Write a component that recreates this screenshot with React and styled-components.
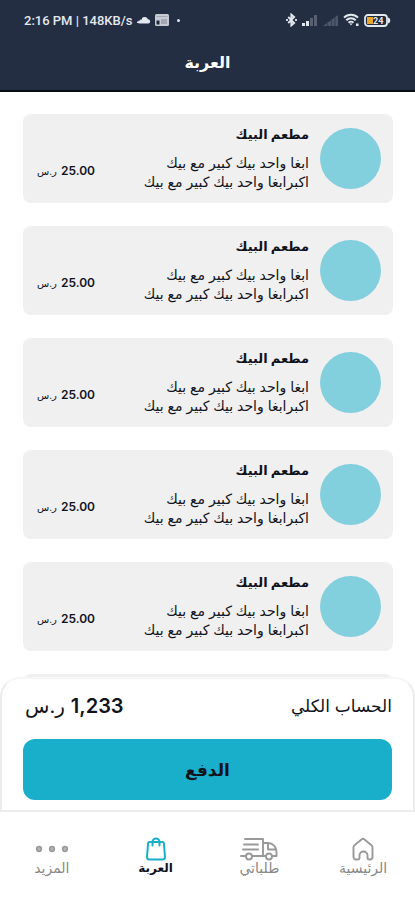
import { useState } from 'react';
import styled, { createGlobalStyle } from 'styled-components';

const items = Array.from({ length: 5 }, (_, i) => ({
  id: i + 1,
  restaurant: 'مطعم البيك',
  details: ['ابغا واحد بيك كبير مع بيك', 'اكبرابغا واحد بيك كبير مع بيك'],
  price: '25.00',
}));

const tabs = [
  { id: 'home', label: 'الرئيسية', Icon: HomeIcon },
  { id: 'orders', label: 'طلباتي', Icon: TruckIcon },
  { id: 'cart', label: 'العربة', Icon: BagIcon },
  { id: 'more', label: 'المزيد', Icon: MoreIcon },
];

export default function App() {
  const [activeTab, setActiveTab] = useState('cart');

  return (
    <>
      <GlobalStyle />
      <Screen dir='rtl' lang='ar'>
        <Header>
          <StatusBar />
          <PageTitle>العربة</PageTitle>
        </Header>
        <CartList>
          {items.map((item) => (
            <CartItem key={item.id} item={item} />
          ))}
          <Card aria-hidden='true'>
            <Thumb />
          </Card>
        </CartList>
        <Checkout>
          <TotalRow>
            <TotalLabel>الحساب الكلي</TotalLabel>
            <Total>
              <bdi>1,233</bdi>
              <TotalCurrency>ر.س</TotalCurrency>
            </Total>
          </TotalRow>
          <PayButton type='button'>الدفع</PayButton>
        </Checkout>
        <TabBar>
          {tabs.map(({ id, label, Icon }) => (
            <Tab key={id} type='button' $active={id === activeTab} onClick={() => setActiveTab(id)}>
              <Icon />
              <TabLabel $active={id === activeTab}>{label}</TabLabel>
            </Tab>
          ))}
        </TabBar>
      </Screen>
    </>
  );
}

function CartItem({ item }) {
  return (
    <Card>
      <Thumb />
      <Info>
        <Restaurant>{item.restaurant}</Restaurant>
        {item.details.map((line) => (
          <Detail key={line}>{line}</Detail>
        ))}
      </Info>
      <Price>
        <bdi>{item.price}</bdi>
        <Currency>ر.س</Currency>
      </Price>
    </Card>
  );
}

function StatusBar() {
  return (
    <Status dir='ltr' lang='en'>
      <StatusGroup>
        <span>2:16 PM | 148KB/s</span>
        <svg width='14' height='8' viewBox='0 0 14 8' fill='#e4e8ef' aria-hidden='true'>
          <path d='M5 7.5V2A3.8 3.8 0 0 1 11 3.2a2.2 2.2 0 0 1 .6 4.3zM3.2 3.5h2v4h-2zM1.6 4.5h2v3h-2zM0 5.5h2V7H0z' />
        </svg>
        <CardIcon />
        <Dot />
      </StatusGroup>
      <StatusGroup>
        <svg width='11' height='14' viewBox='0 0 11 14' fill='none' stroke='#e4e8ef' strokeWidth='1.8' aria-hidden='true'>
          <path d='M2.2 4l6 6-2.900 2.500V1.500L8.200 4l-6 6' />
          <path d='M1 6v2M10 6v2' />
        </svg>
        <SignalIcon />
        <svg width='17' height='12' viewBox='0 0 17 12' aria-hidden='true'>
          <path d='M1 12L16 1v11z' fill='#4d576a' />
          <path d='M5.500 8v4M9.500 5v7M13 3v9' stroke='#353f53' />
        </svg>
        <svg width='17' height='14' viewBox='0 0 17 14' fill='none' stroke='#e4e8ef' strokeWidth='2' aria-hidden='true'>
          <path d='M1 4.6a10 10 0 0 1 14 0M3.3 7.2a6.8 6.8 0 0 1 9.4 0M5.6 9.7a3.4 3.4 0 0 1 4.8 0' />
          <path d='M6.6 10.6h2.8L8 12.6zM13 10.5h2.5V13H13z' fill='#e4e8ef' stroke='none' />
        </svg>
        <svg width='27' height='13' viewBox='0 0 27 13' aria-hidden='true'>
          <rect x='1' y='1' width='22' height='11' rx='3' fill='#202a3d' stroke='#e4e8ef' strokeWidth='1.8' />
          <path d='M24 3.5c3 .6 3 5.4 0 6z' fill='#e4e8ef' />
          <path d='M3 3h6v7H3z' fill='#e9a52b' />
          <text x='9' y='9.5' fontSize='9' fontWeight='700' fill='#e4e8ef'>
            24
          </text>
        </svg>
      </StatusGroup>
    </Status>
  );
}

function CardIcon() {
  return (
    <svg width='14' height='12' viewBox='0 0 14 12' aria-hidden='true'>
      <rect width='14' height='12' rx='1.5' fill='#c6cbd3' />
      <path d='M1.5 2.5h11' stroke='#a2a8b2' />
      <path d='M1.5 6.5h3v4h-3z' fill='#202a3d' />
      <path d='M6 5h6v5H6z' fill='#a2a8b2' />
    </svg>
  );
}

function SignalIcon() {
  return (
    <svg width='17' height='12' viewBox='0 0 17 12' aria-hidden='true'>
      {[3, 5, 8, 11].map((height, i) => (
        <rect key={height} x={1 + i * 4} y={12 - height} width='3' height={height} fill={i < 2 ? '#e4e8ef' : '#566072'} />
      ))}
    </svg>
  );
}

function HomeIcon() {
  return (
    <svg width='22' height='24' viewBox='0 0 22 24' fill='none' stroke='currentColor' strokeWidth='1.9' strokeLinejoin='round' aria-hidden='true'>
      <path d='M1.5 10.2Q1.5 9 2.5 8.2L9.8 2.2q1.2-.9 2.4 0l7.3 6q1 .8 1 2V20a2.5 2.5 0 0 1-2.5 2.5h-1q-1.500 0-1.500-1.500v-2.500a4 4 0 0 0-8 0V21q0 1.500-1.500 1.500H4A2.5 2.5 0 0 1 1.5 20z' />
    </svg>
  );
}

function TruckIcon() {
  return (
    <svg width='38' height='24' viewBox='0 0 38 24' fill='none' stroke='currentColor' strokeWidth='1.9' strokeLinecap='round' strokeLinejoin='round' aria-hidden='true'>
      <path d='M5 2h18v17M4 7.5h14M3 12.5h15M1 19h5M12 19h14M23 6h5c5 0 8.500 4 8.500 9v4h-4M28 7v5.5h8' />
      <circle cx='9' cy='19.5' r='3' />
      <circle cx='29' cy='19.5' r='3' />
    </svg>
  );
}

function BagIcon() {
  return (
    <svg width='20' height='24' viewBox='0 0 20 24' fill='none' stroke='currentColor' strokeWidth='2' strokeLinecap='round' strokeLinejoin='round' aria-hidden='true'>
      <path d='M3.5 5h13q1.2 0 1.4 1.2L19 20a2.5 2.5 0 0 1-2.5 2.5h-13A2.5 2.5 0 0 1 1 20L2.1 6.2Q2.3 5 3.5 5z' />
      <path d='M6.5 8.5V5a3.5 3.5 0 0 1 7 0v3.5' />
    </svg>
  );
}

function MoreIcon() {
  return (
    <svg width='34' height='24' viewBox='0 0 34 24' fill='#b4b4b4' stroke='currentColor' strokeWidth='1.5' aria-hidden='true'>
      <circle cx='4' cy='12' r='2.4' />
      <circle cx='17' cy='12' r='2.4' />
      <circle cx='30' cy='12' r='2.4' />
    </svg>
  );
}

const GlobalStyle = createGlobalStyle`
  *,
  *::before,
  *::after {
    box-sizing: border-box;
  }

  body,
  h1,
  h2,
  p,
  ul {
    margin: 0;
    padding: 0;
  }

  body {
    background: #fff;
    color: #11131c;
    font-family: Inter, 'DejaVu Sans', sans-serif;
  }

  button {
    font-family: inherit;
  }
`;

const Screen = styled.div`
  display: flex;
  flex-direction: column;
  height: 100vh;
`;

const Header = styled.header`
  flex: none;
  border-bottom: 2px solid #090c12;
  background: #232e43;
  color: #fff;
`;

const Status = styled.div`
  display: flex;
  justify-content: space-between;
  align-items: center;
  height: 40px;
  padding: 0 24px;
  font-family: Roboto, sans-serif;
  font-size: 13px;
  font-weight: 500;
  color: #e4e8ef;
`;

const StatusGroup = styled.div`
  display: flex;
  align-items: center;
  gap: 4px;
`;

const Dot = styled.span`
  width: 3px;
  height: 3px;
  margin-left: 4px;
  border-radius: 50%;
  background: #e4e8ef;
`;

const PageTitle = styled.h1`
  padding-bottom: 6px;
  font-size: 16px;
  line-height: 44px;
  text-align: center;
`;

const CartList = styled.ul`
  display: flex;
  flex: 1;
  flex-direction: column;
  gap: 23px;
  min-height: 0;
  padding: 22px 22px 0 23px;
  overflow-y: auto;
  scrollbar-width: none;
  list-style: none;
`;

const Card = styled.li`
  display: flex;
  flex: none;
  align-items: flex-start;
  border-radius: 8px;
  padding: 11px 12px 12px;
  background: #f0f0f0;
`;

const Thumb = styled.span`
  flex: none;
  width: 61px;
  height: 61px;
  margin-top: 3px;
  border-radius: 50%;
  background: #82cfdd;
`;

const Info = styled.div`
  flex: 1;
  margin-right: 11px;
`;

const Restaurant = styled.h2`
  margin-bottom: 10px;
  font-size: 13px;
  line-height: 18px;
`;

const Detail = styled.p`
  font-size: 14px;
  line-height: 19px;
  white-space: nowrap;
`;

const Price = styled.p`
  display: flex;
  align-items: baseline;
  align-self: flex-end;
  gap: 4px;
  padding-bottom: 10px;
  padding-left: 2px;
  font-size: 12px;
  font-weight: 600;
  line-height: 20px;
`;

const Currency = styled.span`
  font-size: 10px;
  font-weight: 400;
`;

const Checkout = styled.section`
  flex: none;
  border: 2px solid #ececec;
  border-top-color: #f6f6f6;
  border-radius: 20px 20px 0 0;
  padding: 10px 21px;
  background: #fff;
`;

const TotalRow = styled.div`
  display: flex;
  justify-content: space-between;
  align-items: center;
  height: 34px;
  margin-bottom: 16px;
`;

const TotalLabel = styled.span`
  font-size: 17px;
`;

const Total = styled.strong`
  display: flex;
  align-items: baseline;
  gap: 6px;
  padding-left: 2px;
  font-size: 20px;
  font-weight: 600;
`;

const TotalCurrency = styled.span`
  font-weight: 400;
`;

const PayButton = styled.button`
  display: block;
  width: 100%;
  height: 61px;
  border: none;
  border-radius: 12px;
  background: #19aec9;
  color: #11131c;
  font-size: 17px;
  font-weight: 700;
  cursor: pointer;
`;

const TabBar = styled.nav`
  display: grid;
  flex: none;
  grid-template-columns: repeat(4, 1fr);
  height: 88px;
  background: #fff;
`;

const Tab = styled.button`
  display: flex;
  flex-direction: column;
  align-items: center;
  border: none;
  padding: 25px 0 0;
  background: transparent;
  color: ${({ $active }) => ($active ? '#19aec9' : '#999')};
  cursor: pointer;
`;

const TabLabel = styled.span`
  font-size: ${({ $active }) => ($active ? '12px' : '14px')};
  font-weight: ${({ $active }) => ($active ? 700 : 400)};
  line-height: 14px;
  color: ${({ $active }) => ($active ? '#11131c' : '#888')};
`;
